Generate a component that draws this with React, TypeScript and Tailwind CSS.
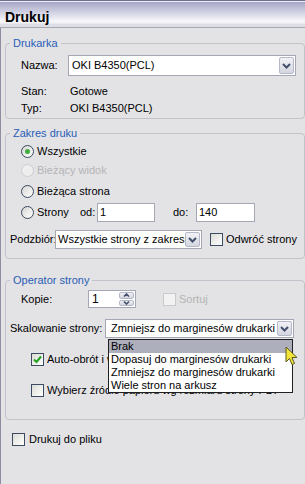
import React from "react";

const Chevron = () => (
  <svg width="9" height="6" viewBox="0 0 9 6">
    <path d="M1 1 L4.5 4.5 L8 1" stroke="#44506c" strokeWidth="2" fill="none" />
  </svg>
);

const ArrowBtn = () => (
  <div className="w-[15px] my-[1px] mr-[1px] rounded-[2px] border border-[#b4b8c8] bg-gradient-to-b from-[#f2f2f6] to-[#d4d6e0] flex items-center justify-center shrink-0">
    <Chevron />
  </div>
);

const Combo = ({ text, className, pad }: { text: string; className: string; pad?: string }) => (
  <div className={`flex border border-[#a3a8b4] bg-white ${className}`}>
    <span className={`flex-1 overflow-hidden whitespace-nowrap self-center ${pad ?? "pl-[3px]"}`}>{text}</span>
    <ArrowBtn />
  </div>
);

const Check = ({ checked, disabled }: { checked?: boolean; disabled?: boolean }) => (
  <div
    className={`w-[13px] h-[13px] shrink-0 border flex items-center justify-center ${
      disabled
        ? "border-[#cacaca] bg-[#f2f2f2]"
        : "border-[#3c4a62] bg-gradient-to-br from-[#dcdcd6] to-white"
    }`}
  >
    {checked && (
      <svg width="9" height="9" viewBox="0 0 9 9">
        <path d="M1 4.5 L3.5 7 L8 1.5" stroke="#21a121" strokeWidth="2" fill="none" />
      </svg>
    )}
  </div>
);

const Radio = ({ checked, disabled }: { checked?: boolean; disabled?: boolean }) => (
  <div
    className={`w-[13px] h-[13px] shrink-0 rounded-full border flex items-center justify-center ${
      disabled
        ? "border-[#cdcdcd] bg-[#eeeeee]"
        : "border-[#3c4a62] bg-gradient-to-br from-[#d6d6d2] to-white"
    }`}
  >
    {checked && <div className="w-[5px] h-[5px] rounded-full bg-[#3fae3f]" />}
  </div>
);

const Legend = ({ text }: { text: string }) => (
  <legend className="ml-[4px] px-[3px] h-[13px] leading-[13px] text-[#2a5db5]">{text}</legend>
);

export default function App() {
  return (
    <div className="relative w-[305px] h-[484px] overflow-hidden bg-[#e3e3e6] text-[11px] text-black font-['Liberation_Sans',Arial,sans-serif]">
      {/* title bar */}
      <div className="h-[28px] pl-[5px] pt-[9px] bg-[linear-gradient(to_bottom,#6e6e90_0px,#6e6e90_1px,#eeeef6_1px,#eeeef6_2px,#a6a6c8_2px,#f6f6fa_21px,#f2f2f6_23px,#dedee6_24px,#dedee6_27px,#a8a8b0_27px,#a8a8b0_28px)]">
        <div className="text-[14px] font-bold leading-[16px]">Drukuj</div>
      </div>

      <div className="flex h-[456px]">
        <div className="w-[3px] bg-[linear-gradient(to_right,#8e8ea2_1px,#ececf0_1px,#ececf0_2px,#8e8ea2_2px)]" />
        <div className="flex-1 pl-[4px]">
          {/* Drukarka */}
          <fieldset className="mt-[9px] w-[300px] border border-[#c2c2ca] rounded-[4px] pb-[3px]">
            <Legend text="Drukarka" />
            <div className="flex items-center h-[21px] mt-[5px]">
              <span className="ml-[15px] w-[47px]">Nazwa:</span>
              <Combo text="OKI B4350(PCL)" className="flex-1 h-[21px] mr-[8px]" />
            </div>
            <div className="flex items-center h-[14px] mt-[8px]">
              <span className="ml-[15px] w-[49px]">Stan:</span>
              <span>Gotowe</span>
            </div>
            <div className="flex items-center h-[14px] mt-[3px]">
              <span className="ml-[15px] w-[49px]">Typ:</span>
              <span>OKI B4350(PCL)</span>
            </div>
          </fieldset>

          {/* Zakres druku */}
          <fieldset className="mt-[8px] w-[300px] border border-[#c2c2ca] rounded-[4px] pb-[9px]">
            <Legend text="Zakres druku" />
            <div className="flex items-center h-[14px] mt-[4px] ml-[15px]">
              <Radio checked />
              <span className="ml-[3px]">Wszystkie</span>
            </div>
            <div className="flex items-center h-[14px] mt-[5px] ml-[15px]">
              <Radio disabled />
              <span className="ml-[3px] text-[#b4b4b4]">Bieżący widok</span>
            </div>
            <div className="flex items-center h-[14px] mt-[7px] ml-[15px]">
              <Radio />
              <span className="ml-[3px]">Bieżąca strona</span>
            </div>
            <div className="flex items-center h-[19px] mt-[5px] ml-[15px]">
              <Radio />
              <span className="ml-[3px] w-[43px]">Strony</span>
              <span className="w-[17px]">od:</span>
              <div className="w-[58px] h-[19px] border border-[#a3a8b4] bg-white pl-[2px] flex items-center">1</div>
              <span className="ml-[18px] w-[23px]">do:</span>
              <div className="w-[59px] h-[19px] border border-[#a3a8b4] bg-white pl-[2px] flex items-center">140</div>
            </div>
            <div className="flex items-center h-[19px] mt-[8px]">
              <span className="ml-[4px] w-[45px]">Podzbiór:</span>
              <Combo text="Wszystkie strony z zakresu" className="w-[147px] h-[19px]" pad="pl-[2px]" />
              <div className="ml-[8px]">
                <Check />
              </div>
              <span className="ml-[3px]">Odwróć strony</span>
            </div>
          </fieldset>

          {/* Operator strony */}
          <fieldset className="mt-[15px] w-[300px] border border-[#c2c2ca] rounded-[4px] pb-[22px]">
            <Legend text="Operator strony" />
            <div className="flex items-center h-[18px] mt-[3px]">
              <span className="ml-[15px] w-[67px]">Kopie:</span>
              <div className="w-[48px] h-[18px] border border-[#a3a8b4] bg-white flex">
                <span className="flex-1 pl-[3px] self-center text-[12px]">1</span>
                <div className="w-[15px] flex flex-col my-[1px] mr-[1px] gap-[1px]">
                  <div className="flex-1 rounded-[2px] border border-[#b4b8c8] bg-gradient-to-b from-[#f2f2f6] to-[#d4d6e0] flex items-center justify-center">
                    <svg width="7" height="4" viewBox="0 0 7 4">
                      <path d="M1 3.5 L3.5 1 L6 3.5" stroke="#44506c" strokeWidth="1.6" fill="none" />
                    </svg>
                  </div>
                  <div className="flex-1 rounded-[2px] border border-[#b4b8c8] bg-gradient-to-b from-[#f2f2f6] to-[#d4d6e0] flex items-center justify-center">
                    <svg width="7" height="4" viewBox="0 0 7 4">
                      <path d="M1 0.5 L3.5 3 L6 0.5" stroke="#44506c" strokeWidth="1.6" fill="none" />
                    </svg>
                  </div>
                </div>
              </div>
              <div className="ml-[27px]">
                <Check disabled />
              </div>
              <span className="ml-[3px] text-[#b4b4b4]">Sortuj</span>
            </div>
            <div className="flex items-center h-[19px] mt-[11px]">
              <span className="ml-[4px] w-[95px]">Skalowanie strony:</span>
              <div className="relative">
                <Combo text="Zmniejsz do marginesów drukarki" className="w-[189px] h-[19px]" pad="pl-[5px]" />
                <div className="absolute z-10 left-[3px] right-[1px] top-[20px] border border-[#202020] bg-white">
                  <div className="h-[13px] leading-[13px] pl-[2px] bg-[#adafbd]">Brak</div>
                  <div className="h-[13px] leading-[13px] pl-[2px]">Dopasuj do marginesów drukarki</div>
                  <div className="h-[13px] leading-[13px] pl-[2px]">Zmniejsz do marginesów drukarki</div>
                  <div className="h-[13px] leading-[13px] pl-[2px]">Wiele stron na arkusz</div>
                </div>
              </div>
            </div>
            <div className="flex items-center h-[13px] mt-[15px] ml-[25px]">
              <Check checked />
              <span className="ml-[3px] whitespace-nowrap">Auto-obrót i wyśrodkowanie</span>
            </div>
            <div className="flex items-center h-[13px] mt-[18px] ml-[25px]">
              <Check />
              <span className="ml-[3px] whitespace-nowrap">Wybierz źródło papieru wg rozmiaru strony PDF</span>
            </div>
          </fieldset>

          <div className="flex items-center h-[13px] mt-[13px] ml-[7px]">
            <Check />
            <span className="ml-[4px]">Drukuj do pliku</span>
          </div>
        </div>
      </div>

      {/* mouse cursor */}
      <svg className="absolute left-[285px] top-[346px] z-20" width="13" height="20" viewBox="0 0 13 20">
        <path d="M1 1 L1 16 L4.5 12.5 L7 18.5 L9.5 17.5 L7 11.5 L12 11.5 Z" fill="#f4e43a" stroke="#5a5a20" strokeWidth="1" strokeLinejoin="round" />
      </svg>
    </div>
  );
}
